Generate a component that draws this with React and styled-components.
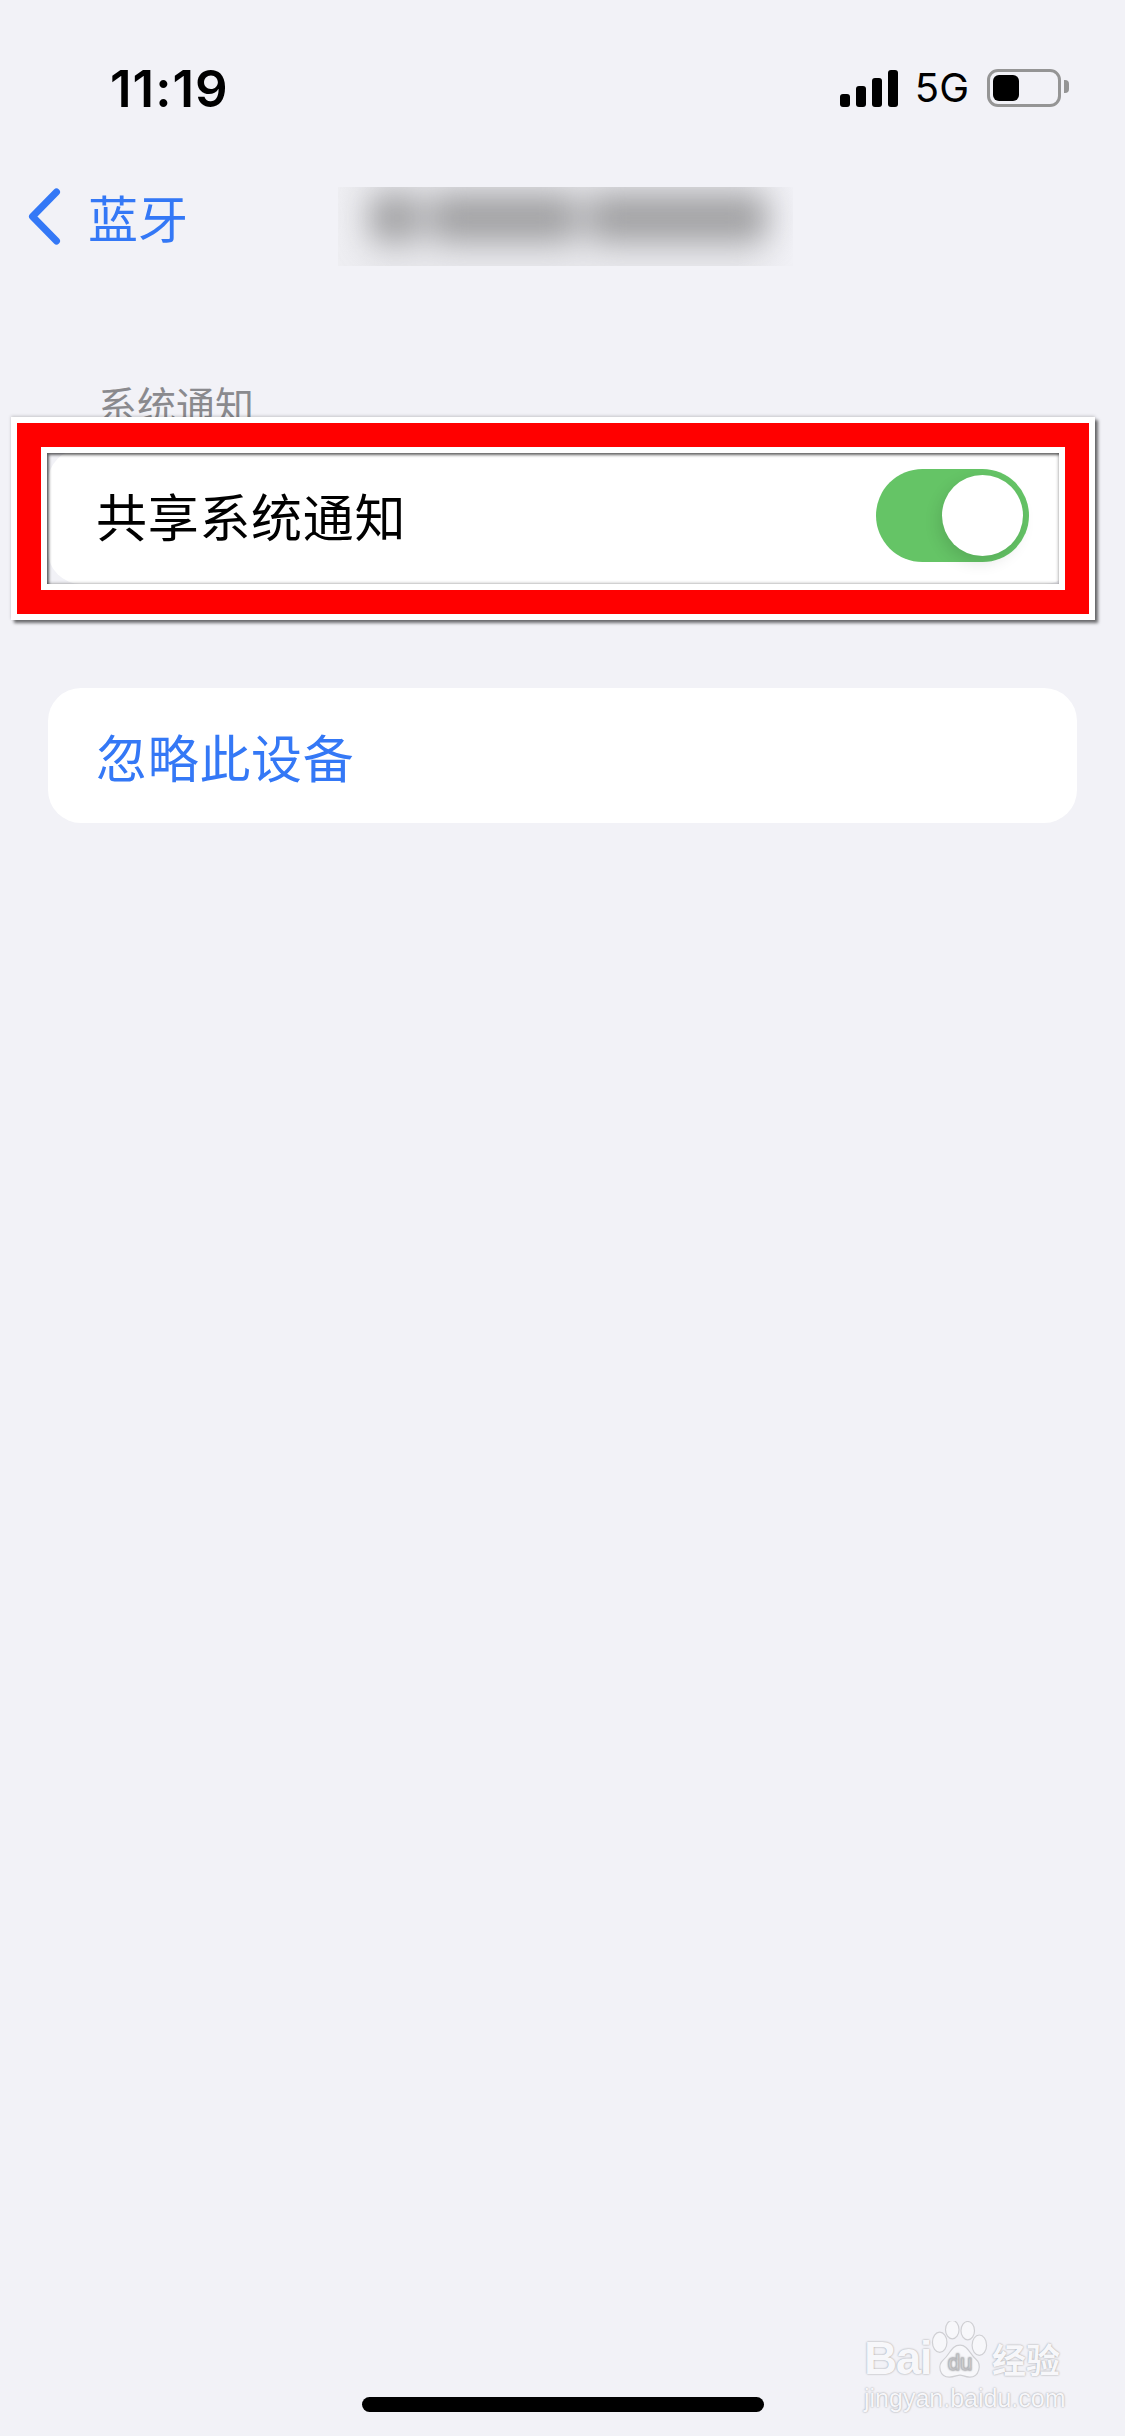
import React from 'react';
import styled, { createGlobalStyle } from 'styled-components';

const CJK = `"Noto Sans CJK SC", "Noto Sans", sans-serif`;
const BLUE = '#3478f6';

const GlobalStyle = createGlobalStyle`
  html, body {
    margin: 0;
    padding: 0;
    background: #f2f2f7;
  }
  * {
    box-sizing: border-box;
  }
`;

const Page = styled.div`
  position: relative;
  display: flex;
  flex-direction: column;
  width: 1125px;
  height: 2436px;
  overflow: hidden;
  background: #f2f2f7;
  font-family: ${CJK};
`;

const StatusBar = styled.div`
  display: flex;
  align-items: center;
  justify-content: space-between;
  height: 176px;
  padding: 0 64px 0 110px;
`;

const Clock = styled.div`
  font-family: Inter, sans-serif;
  font-size: 51px;
  font-weight: 600;
  line-height: 1;
  letter-spacing: 1px;
  color: #000;
`;

const StatusIcons = styled.div`
  display: flex;
  align-items: center;
`;

const Signal = styled.div`
  display: flex;
  align-items: flex-end;
  gap: 6px;
  height: 37px;
`;

const SignalBar = styled.span`
  width: 10px;
  height: ${(p) => p.$h}px;
  border-radius: 3px;
  background: #000;
`;

const Network = styled.span`
  margin-left: 17px;
  font-family: Inter, sans-serif;
  font-size: 40px;
  line-height: 1;
  color: #000;
`;

const Battery = styled.div`
  position: relative;
  width: 74px;
  height: 38px;
  margin-left: 18px;
  padding: 3px;
  border: 3px solid #959595;
  border-radius: 11px;

  &::after {
    content: '';
    position: absolute;
    top: 8px;
    right: -11px;
    width: 5px;
    height: 13px;
    border-radius: 0 4px 4px 0;
    background: #959595;
  }
`;

const BatteryLevel = styled.div`
  width: 26px;
  height: 100%;
  border-radius: 6px;
  background: #000;
`;

const NavBar = styled.div`
  display: flex;
  align-items: flex-start;
  height: 90px;
  padding: 11px 0 0 28px;
`;

const BackLink = styled.div`
  display: flex;
  align-items: center;
  gap: 27px;
  width: 310px;
  height: 58px;
  font-size: 50px;
  line-height: 58px;
  color: ${BLUE};
`;

const BlurBox = styled.div`
  display: flex;
  width: 455px;
  height: 79px;
  overflow: hidden;
  background: linear-gradient(90deg, #eeeef2, #e9e9ed 12%, #e9e9ed 88%, #f1f1f6);
`;

const Smudge = styled.div`
  display: flex;
  gap: 10px;
  width: 100%;
  height: 48px;
  margin-top: 7px;
  padding: 0 26px 0 32px;
  filter: blur(16px);
`;

const SmudgeWord = styled.span`
  flex: ${(p) => p.$grow};
  background: #a0a0a2;
  border-radius: 10px;
`;

const SectionLabel = styled.div`
  height: 183px;
  padding: 112px 0 0 98px;
  font-size: 39px;
  line-height: 50px;
  color: #8a8a8e;
`;

const Card = styled.div`
  display: flex;
  align-items: center;
  justify-content: space-between;
  height: 135px;
  margin: ${(p) => p.$top || 0}px 48px 0;
  padding: 0 48px ${(p) => p.$lift || 0}px;
  border-radius: 33px;
  background: #fff;
  font-size: 51px;
  line-height: 60px;
  letter-spacing: 0.7px;
  color: ${(p) => p.$color || '#000'};
`;

const Toggle = styled.div`
  display: flex;
  justify-content: flex-end;
  width: 153px;
  height: 93px;
  padding: 6px;
  border-radius: 47px;
  background: #65c466;
`;

const Knob = styled.span`
  width: 81px;
  height: 81px;
  border-radius: 50%;
  background: #fff;
  box-shadow: -3px 6px 16px rgba(0, 0, 0, 0.12);
`;

const HomeIndicator = styled.div`
  align-self: center;
  width: 402px;
  height: 15px;
  margin-top: auto;
  margin-bottom: 24px;
  border-radius: 8px;
  background: #000;
`;

/* red highlight somebody drew over the screenshot */
const Annotation = styled.div`
  position: absolute;
  top: 417px;
  left: 11px;
  width: 1084px;
  height: 203px;
  border: 6px solid #fff;
  box-shadow: 3px 3px 3px rgba(0, 0, 0, 0.55), 0 -1px 3px rgba(0, 0, 0, 0.18);
`;

const AnnotationRed = styled.div`
  width: 100%;
  height: 100%;
  border: 24px solid #f00;
`;

const AnnotationInner = styled.div`
  width: 100%;
  height: 100%;
  border: 6px solid #fff;
`;

const AnnotationHole = styled.div`
  width: 100%;
  height: 100%;
  box-shadow: inset 2px 2px 3px rgba(0, 0, 0, 0.6), inset -1px -1px 3px rgba(0, 0, 0, 0.25);
`;

const Watermark = styled.div`
  position: absolute;
  top: 2316px;
  left: 864px;
  width: 204px;
  color: #f7f7fa;
  white-space: nowrap;
  text-shadow: 0 0 2px rgba(0, 0, 0, 0.4);
`;

const WatermarkTop = styled.div`
  display: flex;
  align-items: flex-end;
  height: 62px;
`;

const WatermarkBai = styled.span`
  font-family: "Liberation Sans", sans-serif;
  font-size: 46px;
  font-weight: 700;
  line-height: 40px;
  letter-spacing: -1.5px;
`;

const WatermarkCn = styled.span`
  flex: none;
  margin-left: 3px;
  font-size: 34px;
  font-weight: 700;
  line-height: 38px;
`;

const WatermarkDomain = styled.div`
  margin-top: 6px;
  font-family: "Liberation Sans", sans-serif;
  font-size: 25px;
  line-height: 28px;
`;

const Chevron = () => (
  <svg width="33" height="57" viewBox="0 0 33 57" fill="none">
    <path d="M28.5 4 L4.5 28.5 L28.5 53" stroke={BLUE} strokeWidth="7" strokeLinecap="round" strokeLinejoin="round" />
  </svg>
);

const Paw = () => (
  <svg width="58" height="58" viewBox="0 0 60 60" style={{ flex: 'none', marginBottom: '-1px' }}>
    <g fill="#f7f7fa" stroke="#cfcfd3" strokeWidth="1.2">
      <ellipse cx="9" cy="22" rx="7.5" ry="10.5" />
      <ellipse cx="22" cy="9" rx="7" ry="9.5" />
      <ellipse cx="38" cy="10" rx="7" ry="9.5" />
      <ellipse cx="50" cy="25" rx="7.5" ry="10.5" />
      <path d="M30 25 C38 25 40 34 46 39 C53 45 50 58 40 58 C35 58 33 56 30 56 C27 56 24 58 19 58 C9 58 6 46 13 40 C20 34 21 25 30 25 Z" />
    </g>
    <text x="30" y="51" textAnchor="middle" fontFamily="Liberation Sans, sans-serif" fontSize="23" fill="#f7f7fa" stroke="#bdbdc1" strokeWidth="0.8">du</text>
  </svg>
);

const App = () => {
  return (
    <Page>
      <GlobalStyle />
      <StatusBar>
        <Clock>11:19</Clock>
        <StatusIcons>
          <Signal>
            {[13, 21, 29, 37].map((h) => (
              <SignalBar key={h} $h={h} />
            ))}
          </Signal>
          <Network>5G</Network>
          <Battery>
            <BatteryLevel />
          </Battery>
        </StatusIcons>
      </StatusBar>

      <NavBar>
        <BackLink>
          <Chevron />
          <span>蓝牙</span>
        </BackLink>
        <BlurBox>
          <Smudge>
            <SmudgeWord $grow={1} />
            <SmudgeWord $grow={3} />
            <SmudgeWord $grow={3.6} />
          </Smudge>
        </BlurBox>
      </NavBar>

      <SectionLabel>系统通知</SectionLabel>
      <Card $lift={3}>
        <span>共享系统通知</span>
        <Toggle>
          <Knob />
        </Toggle>
      </Card>
      <Card $top={104} $color={BLUE}>
        <span>忽略此设备</span>
      </Card>

      <HomeIndicator />

      <Annotation>
        <AnnotationRed>
          <AnnotationInner>
            <AnnotationHole />
          </AnnotationInner>
        </AnnotationRed>
      </Annotation>

      <Watermark>
        <WatermarkTop>
          <WatermarkBai>Bai</WatermarkBai>
          <Paw />
          <WatermarkCn>经验</WatermarkCn>
        </WatermarkTop>
        <WatermarkDomain>jingyan.baidu.com</WatermarkDomain>
      </Watermark>
    </Page>
  );
};

export default App;
